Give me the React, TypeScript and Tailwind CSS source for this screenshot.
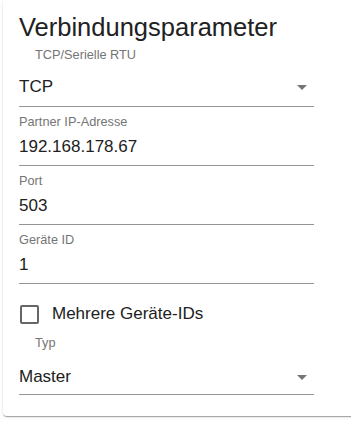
import React from 'react';

const font = { fontFamily: '"Liberation Sans", Arial, sans-serif' };

function ArrowDown() {
  return (
    <svg className="w-6 h-6 shrink-0" viewBox="0 0 24 24" fill="#757575">
      <path d="M7 10l5 5 5-5z" />
    </svg>
  );
}

function SelectField({ value, className }: { value: string; className: string }) {
  return (
    <div className={`flex items-center justify-between h-[24px] border-b border-[#949494] box-content ${className}`}>
      <span className="text-[17px] leading-[24px] text-[#212121]">{value}</span>
      <ArrowDown />
    </div>
  );
}

function TextField({ label, value }: { label: string; value: string }) {
  return (
    <div className="border-b border-[#949494] pb-[6px]">
      <div className="mt-[7px] text-[12.75px] leading-[16px] text-[#757575]">{label}</div>
      <div className="mt-[5px] text-[17px] leading-[24px] text-[#212121]">{value}</div>
    </div>
  );
}

export default function App() {
  return (
    <div className="w-[351px] h-[435px] bg-white overflow-hidden" style={font}>
      <div className="ml-[3px] w-[380px] bg-white rounded-b-[4px] shadow-[0_2px_1px_-1px_rgba(0,0,0,0.2),0_1px_1px_0_rgba(0,0,0,0.14),0_1px_3px_0_rgba(0,0,0,0.12)] pl-4 pt-[11px] pb-[21px]">
        <div className="w-[295px]">
          {/* Titel */}
          <h2 className="text-[25.5px] leading-[32px] text-[#212121]">Verbindungsparameter</h2>
          <div className="mt-[4px] pl-4 text-[12.75px] leading-[16px] text-[#757575]">TCP/Serielle RTU</div>

          <SelectField value="TCP" className="mt-[12px] pb-[7px]" />

          <TextField label="Partner IP-Adresse" value="192.168.178.67" />
          <TextField label="Port" value="503" />
          <TextField label="Geräte ID" value="1" />

          {/* Checkbox */}
          <label className="mt-[18px] flex items-center h-[24px]">
            <span className="ml-[1px] w-[19px] h-[19px] border-2 border-[#666] rounded-[2px] box-border" />
            <span className="ml-[13px] text-[17px] leading-[24px] text-[#212121]">Mehrere Geräte-IDs</span>
          </label>

          <div className="mt-[9px] pl-4 text-[12.75px] leading-[16px] text-[#757575]">Typ</div>
          <SelectField value="Master" className="mt-[14px] pb-[5px]" />
        </div>
      </div>
    </div>
  );
}
